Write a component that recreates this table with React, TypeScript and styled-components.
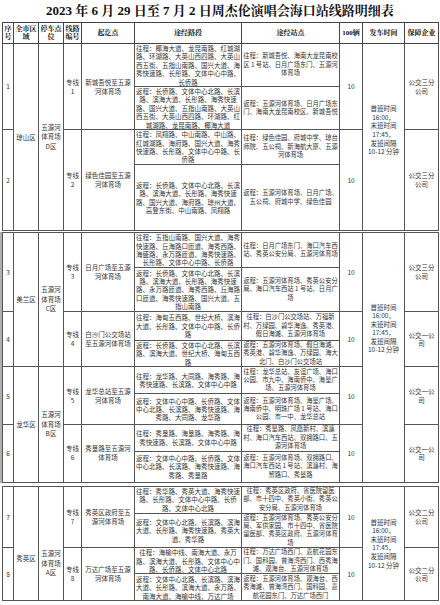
import React from "react";
import styled, { createGlobalStyle } from "styled-components";

const Global = createGlobalStyle`
  html, body { margin: 0; padding: 0; background: #fff; }
  body {
    width: 440px; height: 605px; overflow: hidden;
    font-family: "Noto Sans CJK SC", "Liberation Sans", sans-serif;
  }
`;

const Page = styled.div`
  width: 440px;
  height: 605px;
  overflow: hidden;
  display: flex;
  flex-direction: column;
  padding-left: 2px;
  box-sizing: border-box;
`;

const Title = styled.h1`
  margin: 0 0 0 -2px;
  height: 22px;
  line-height: 22px;
  text-align: center;
  white-space: nowrap;
  font-size: 13px;
  font-weight: 700;
  color: #111;
  font-family: "Liberation Serif", "Noto Serif CJK SC", "Noto Sans CJK SC", serif;
`;

const Sheet = styled.table<{ $gap: number; $shade?: boolean }>`
  flex: none;
  width: 436px;
  table-layout: fixed;
  border-collapse: collapse;
  margin-top: ${(p) => p.$gap}px;
  border: 1px solid #444;
  ${(p) => (p.$shade ? "box-shadow: -2px 0 0 #b0b0b0;" : "")}
`;

const Row = styled.tr<{ $h: number }>`
  height: ${(p) => p.$h}px;
`;

const Head = styled.th`
  border: 1px solid #444;
  padding: 0 1px;
  font-size: 7px;
  line-height: 8.5px;
  font-weight: 700;
  color: #111;
  text-align: center;
  vertical-align: middle;
  font-family: "Liberation Serif", "Noto Serif CJK SC", "Noto Sans CJK SC", serif;
`;

const Cell = styled.td`
  border: 1px solid #555;
  padding: 0 1px;
  text-align: center;
  vertical-align: middle;
  font-size: 6.5px;
  line-height: 8.4px;
  color: #333;
  overflow: hidden;
`;

const IndexCell = styled(Cell)`
  font-size: 6.5px;
`;

const DistrictCell = styled(Cell)<{ $pt: number }>`
  padding-top: ${(p) => p.$pt}px;
  padding-left: 2px;
  padding-right: 2px;
`;

const ParkingCell = styled(Cell)<{ $pt: number }>`
  padding-top: ${(p) => p.$pt}px;
  padding-left: 2px;
  padding-right: 2px;
  line-height: 9.5px;
`;

const LineCell = styled(Cell)`
  line-height: 9px;
`;

const StartCell = styled(Cell)`
  padding: 0 3px;
  line-height: 9px;
`;

const RoadCell = styled(Cell)`
  padding: 0 1px;
`;

const StationCell = styled(Cell)`
  font-size: 6.3px;
  padding: 0 1px;
`;

const CountCell = styled(Cell)``;

const TimeCell = styled(Cell)<{ $pb: number }>`
  padding: 0 3px ${(p) => p.$pb}px;
  line-height: 8.6px;
`;

const CompanyCell = styled(Cell)`
  padding: 0 3px;
  line-height: 8.6px;
`;

type Route = {
  no: number;
  start: string;
  goRoad: string;
  goStop: string;
  backRoad: string;
  backStop: string;
  company: string;
  h: [number, number];
};

type Group = { district: string; parking: string; routes: Route[] };

type Section = { groups: Group[]; timePad: number; areaPad: number; parkPad: number; gap: number; shade?: boolean };

const sections: Section[] = [
  {
    gap: 0,
    timePad: 14,
    areaPad: 0,
    parkPad: 0,
    groups: [
      {
        district: "琼山区",
        parking: "五源河体育场D区",
        routes: [
          {
            no: 1,
            start: "新城吾悦至五源河体育场",
            goRoad:
              "往程：椰海大道、龙昆南路、红城湖路、环湖路、大英山西四路、大英山西五街、五指山南路、国兴大道、海秀快速路、长彤路、文体中心中路、长侨路",
            goStop: "往程：新城吾悦、海南大龙昆南校区 1 号站、日月广场东门、五源河体育场",
            backRoad:
              "返程：长侨路、文体中心北路、长滨路、滨海大道、长彤路、海秀快速路、国兴大道、五指山南路、大英山西五街、大英山西四路、环湖路、红城湖路、龙昆南路、椰海大道",
            backStop: "返程：五源河体育场、日月广场东门、海南大龙昆南校区、新城吾悦",
            company: "公交三分公司",
            h: [43, 43],
          },
          {
            no: 2,
            start: "绿色佳园至五源河体育场",
            goRoad:
              "往程：凤翔路、中山南路、中山路、红城湖路、海府路、国兴大道、海秀快速路、长彤路、文体中心中路、长侨路",
            goStop: "往程：绿色佳园、府城中学、琼台师院、五公祠、新海航大厦、五源河体育场",
            backRoad:
              "返程：长侨路、文体中心北路、长滨路、滨海大道、长彤路、海秀快速路、国兴大道、海府路、琼州大道、高登东街、中山南路、凤翔路",
            backStop: "返程：五源河体育场、日月广场、五公祠、府城中学、绿色佳园",
            company: "公交三分公司",
            h: [35, 66],
          },
        ],
      },
    ],
  },
  {
    gap: 1,
    shade: true,
    timePad: 58,
    areaPad: 0,
    parkPad: 0,
    groups: [
      {
        district: "美兰区",
        parking: "五源河体育场C区",
        routes: [
          {
            no: 3,
            start: "日月广场至五源河体育场",
            goRoad:
              "往程：五指山南路、国兴大道、海秀快速路、丘海路口匝道、海秀西路、海盛路、永万路匝道、海秀快速路、长彤路、文体中心中路、长侨路",
            goStop: "往程：日月广场东门、海口汽车西站、秀英公安分局、五源河体育场",
            backRoad:
              "返程：长侨路、文体中心北路、长滨路、滨海大道、长彤路、海秀快速路、永万路匝道、海秀西路、丘海路口匝道、海秀快速路、国兴大道、五指山南路",
            backStop: "返程：五源河体育场、秀英公安分局、海口汽车西站 1 号站、日月广场",
            company: "公交三分公司",
            h: [35, 44],
          },
          {
            no: 4,
            start: "白沙门公交场站至五源河体育场",
            goRoad: "往程：海甸五西路、世纪大桥、滨海大道、长彤路、文体中心中路、长侨路",
            goStop: "往程：白沙门公交场站、万福新村、万绿园、碧华海逸、秀英港、假日海滩、五源河体育场",
            backRoad: "返程：长侨路、文体中心北路、长滨路、滨海大道、世纪大桥、海甸五西路",
            backStop: "返程：五源河体育场、假日海滩、秀英港、碧华海逸、万绿园、海大北门、白沙门公交场站",
            company: "公交一公司",
            h: [29, 26],
          },
        ],
      },
      {
        district: "龙华区",
        parking: "五源河体育场B区",
        routes: [
          {
            no: 5,
            start: "龙华总站至五源河体育场",
            goRoad: "往程：龙华路、大同路、海秀路、海秀快速路、长滨路、文体中心中路",
            goStop: "往程：龙华总站、友谊广场、海口公园、市九中、海南侨中、海垦广场、五源河体育场",
            backRoad:
              "返程：文体中心中路、长侨路、文体中心北路、长滨路、海秀快速路、海秀路、大同路、龙华路",
            backStop: "返程：五源河体育场、海垦广场、海南侨中、明珠广场 1 号站、海口公园、市一中、龙华总站",
            company: "公交一公司",
            h: [27, 31],
          },
          {
            no: 6,
            start: "秀垦路至五源河体育场",
            goRoad: "往程：秀垦路、海垦路、海秀路、海秀快速路、长滨路、文体中心中路",
            goStop: "往程：秀垦路、凤凰新村、滨濂村、海口汽车西站、双拥路口、五源河体育场",
            backRoad: "返程：文体中心中路、长侨路、文体中心北路、长滨路、海秀快速路、海秀路、秀垦路",
            backStop: "返程：五源河体育场、双拥路口、海口汽车西站 1 号站、滨濂村、海贸路口、秀垦路",
            company: "公交一公司",
            h: [24, 31],
          },
        ],
      },
    ],
  },
  {
    gap: 3,
    timePad: 0,
    areaPad: 30,
    parkPad: 40,
    groups: [
      {
        district: "秀英区",
        parking: "五源河体育场A区",
        routes: [
          {
            no: 7,
            start: "秀英区政府至五源河体育场",
            goRoad: "往程：秀华路、秀英大道、海秀快速路、长彤路、文体中心中路、长侨路、文体中心北路",
            goStop: "往程：秀英区政府、省医院留医部、市十四中、秀英小街、秀英公安分局、五源河体育场",
            backRoad: "返程：文体中心北路、长滨路、滨海大道、长彤路、海秀快速路、秀英大道、秀华路",
            backStop:
              "返程：五源河体育场、秀英公安分局、军供家园、市十四中、省医院留医部、秀英区政府、五源河体育场",
            company: "公交二分公司",
            h: [27, 34],
          },
          {
            no: 8,
            start: "万达广场至五源河体育场",
            goRoad:
              "往程：海榆中线、南海大道、永万路、滨海大道、长彤路、文体中心中路、长侨路、文体中心北路",
            goStop: "往程：万达广场西门、嘉航花园东门、国科园、曾海湾西门、西秀海滩、观海台、五源河体育场",
            backRoad:
              "返程：文体中心北路、长滨路、滨海大道、长彤路、滨海大道、永万路、南海大道、海榆中线、万达广场",
            backStop: "返程：五源河体育场、观海台、西秀海滩、曾海湾西门、国科园、嘉航花园东门、万达广场西门",
            company: "公交二分公司",
            h: [26, 27],
          },
        ],
      },
    ],
  },
];

const widths = [11, 25, 25, 18, 53, 107, 98, 23, 42, 34];

const Cols = () => (
  <colgroup>
    {widths.map((w, i) => (
      <col key={i} style={{ width: w }} />
    ))}
  </colgroup>
);

const TimeText = () => (
  <>
    首班时间
    <br />
    16:00，
    <br />
    末班时间
    <br />
    17:45，
    <br />
    发班间隔
    <br />
    10-12 分钟
  </>
);

const SectionTable: React.FC<{ s: Section; withHead?: boolean }> = ({ s, withHead }) => {
  const total = s.groups.reduce((n, g) => n + g.routes.length * 2, 0);
  let first = true;
  return (
    <Sheet $gap={s.gap} $shade={s.shade}>
      <Cols />
      {withHead && (
        <thead>
          <Row $h={21}>
            <Head>
              序<br />号
            </Head>
            <Head>
              全市区
              <br />域
            </Head>
            <Head>
              停车点
              <br />位
            </Head>
            <Head>
              线路
              <br />
              编号
            </Head>
            <Head>起讫点</Head>
            <Head>途经路段</Head>
            <Head>途经站点</Head>
            <Head>100辆</Head>
            <Head>发车时间</Head>
            <Head>保障企业</Head>
          </Row>
        </thead>
      )}
      <tbody>
        {s.groups.map((g) =>
          g.routes.map((r, ri) => {
            const showTime = first;
            first = false;
            return (
              <React.Fragment key={r.no}>
                <Row $h={r.h[0]}>
                  <IndexCell rowSpan={2}>{r.no}</IndexCell>
                  {ri === 0 && (
                    <DistrictCell rowSpan={g.routes.length * 2} $pt={s.areaPad}>
                      {g.district}
                    </DistrictCell>
                  )}
                  {ri === 0 && (
                    <ParkingCell rowSpan={g.routes.length * 2} $pt={s.parkPad}>
                      {g.parking}
                    </ParkingCell>
                  )}
                  <LineCell rowSpan={2}>
                    专线
                    <br />
                    {r.no}
                  </LineCell>
                  <StartCell rowSpan={2}>{r.start}</StartCell>
                  <RoadCell>{r.goRoad}</RoadCell>
                  <StationCell>{r.goStop}</StationCell>
                  <CountCell rowSpan={2}>10</CountCell>
                  {showTime && (
                    <TimeCell rowSpan={total} $pb={s.timePad}>
                      <TimeText />
                    </TimeCell>
                  )}
                  <CompanyCell rowSpan={2}>{r.company}</CompanyCell>
                </Row>
                <Row $h={r.h[1]}>
                  <RoadCell>{r.backRoad}</RoadCell>
                  <StationCell>{r.backStop}</StationCell>
                </Row>
              </React.Fragment>
            );
          })
        )}
      </tbody>
    </Sheet>
  );
};

export default function App() {
  return (
    <>
      <Global />
      <Page>
        <Title>2023 年 6 月 29 日至 7 月 2 日周杰伦演唱会海口站线路明细表</Title>
        {sections.map((s, i) => (
          <SectionTable key={i} s={s} withHead={i === 0} />
        ))}
      </Page>
    </>
  );
}
